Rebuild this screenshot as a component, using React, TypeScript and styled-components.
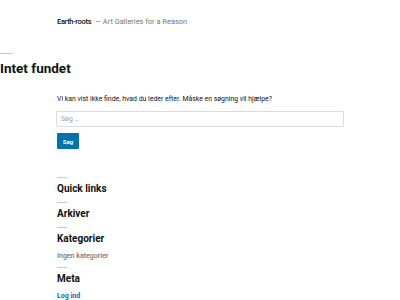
import React from "react";
import styled, { createGlobalStyle } from "styled-components";

const Global = createGlobalStyle`
  html, body { margin: 0; padding: 0; background: #fff; }
  body { font-family: Roboto, "Liberation Sans", sans-serif; color: #111; }
  * { box-sizing: border-box; }
`;

const Page = styled.div`
  width: 400px;
  height: 300px;
  overflow: hidden;
  display: flex;
  flex-direction: column;
`;

const SiteHeader = styled.header`
  padding: 18px 0 0 57px;
  font-size: 7.45px;
  line-height: 8px;
  display: flex;
  gap: 4px;
`;

const SiteTitle = styled.span`
  font-weight: 500;
  color: #111;
  letter-spacing: -0.04em;
`;

const Tagline = styled.span`
  color: #767676;
`;

const Rule = styled.hr<{ $w: number }>`
  width: ${(p) => p.$w}px;
  height: 1px;
  border: 0;
  margin: 0;
  background: #c6c6c6;
`;

const PageHeading = styled.section`
  margin-top: 27px;
  display: flex;
  flex-direction: column;
  gap: 6px;
`;

const PageTitle = styled.h1`
  margin: 0;
  font-size: 13.5px;
  line-height: 16px;
  font-weight: 700;
`;

const Content = styled.main`
  padding-left: 56px;
  display: flex;
  flex-direction: column;
`;

const Lead = styled.p`
  margin: 18px 0 0 1px;
  font-size: 6.9px;
  line-height: 10px;
  color: #111;
`;

const SearchForm = styled.form`
  margin-top: 7px;
  display: flex;
  flex-direction: column;
  align-items: flex-start;
  gap: 6px;
`;

const SearchInput = styled.input`
  width: 288px;
  height: 16px;
  border: 1px solid #dcdcdc;
  border-radius: 1px;
  padding: 0 4px;
  font-family: inherit;
  font-size: 6.8px;
  color: #111;
  &::placeholder { color: #a0a0a0; }
`;

const SearchButton = styled.button`
  width: 22px;
  height: 16px;
  margin-left: 1px;
  border: 0;
  border-radius: 1px;
  background: #0073aa;
  color: #fff;
  font-family: inherit;
  font-weight: 700;
  font-size: 6px;
  padding: 0;
`;

const Widgets = styled.aside`
  margin-top: 28px;
  padding-left: 57px;
  display: flex;
  flex-direction: column;
  gap: 7px;
`;

const Widget = styled.section`
  display: flex;
  flex-direction: column;
  gap: 5px;
`;

const WidgetTitle = styled.h2`
  margin: 0;
  font-size: 10px;
  line-height: 12px;
  font-weight: 700;
`;

const WidgetItem = styled.div<{ $link?: boolean }>`
  margin-top: 2px;
  font-size: 7px;
  line-height: 8px;
  font-weight: ${(p) => (p.$link ? 700 : 500)};
  color: ${(p) => (p.$link ? "#0073aa" : "#767676")};
`;

export default function App() {
  return (
    <Page>
      <Global />
      <SiteHeader>
        <SiteTitle>Earth-roots</SiteTitle>
        <Tagline>— Art Galleries for a Reason</Tagline>
      </SiteHeader>
      <PageHeading>
        <Rule $w={13} />
        <PageTitle>Intet fundet</PageTitle>
      </PageHeading>
      <Content>
        <Lead>Vi kan vist ikke finde, hvad du leder efter. Måske en søgning vil hjælpe?</Lead>
        <SearchForm onSubmit={(e) => e.preventDefault()}>
          <SearchInput placeholder="Søg …" />
          <SearchButton type="submit">Søg</SearchButton>
        </SearchForm>
      </Content>
      <Widgets>
        <Widget>
          <Rule $w={10} />
          <WidgetTitle>Quick links</WidgetTitle>
        </Widget>
        <Widget>
          <Rule $w={10} />
          <WidgetTitle>Arkiver</WidgetTitle>
        </Widget>
        <Widget>
          <Rule $w={10} />
          <WidgetTitle>Kategorier</WidgetTitle>
          <WidgetItem>Ingen kategorier</WidgetItem>
        </Widget>
        <Widget>
          <Rule $w={10} />
          <WidgetTitle>Meta</WidgetTitle>
          <WidgetItem $link>Log ind</WidgetItem>
        </Widget>
      </Widgets>
    </Page>
  );
}
